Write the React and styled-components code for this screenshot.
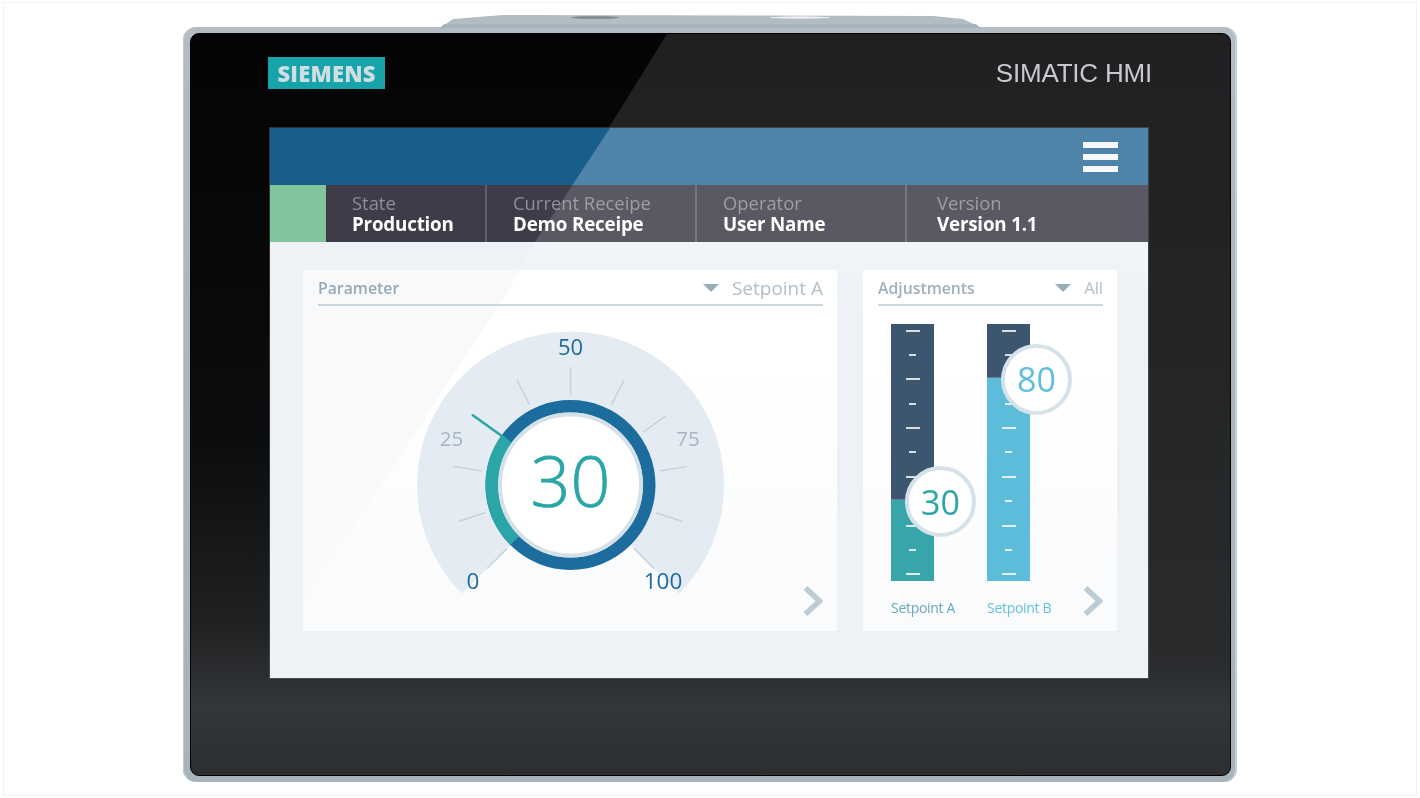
import React from "react";
import styled, { createGlobalStyle } from "styled-components";

const Global = createGlobalStyle`
  html, body { margin: 0; padding: 0; background: #fff; }
  #root { width: 1420px; height: 798px; overflow: hidden; }
  * { box-sizing: border-box; }
`;
const FONT = `"Open Sans", "Noto Sans", "Liberation Sans", sans-serif`;

const Page = styled.div`
  width: 1414px; height: 794px; margin: 2px 3px;
  border: 1px solid #f1f2f3; background: #fff;
  display: flex; justify-content: center; align-items: flex-start;
  padding-top: 24px; font-family: ${FONT};
`;
const Device = styled.div`
  position: relative; width: 1054px; height: 755px;
  padding: 6px 6px 6px 7px; border-radius: 13px;
  background: linear-gradient(180deg, #b2bcc2 0%, #a9b6be 50%, #a8b4bb 100%);
  box-shadow: inset 1px 0 0 #c3ccd2, inset -2px 0 0 #c2ced4;
  filter: blur(0.35px);
`;
const Mount = styled.svg`
  position: absolute; left: 250px; top: -13px; width: 560px; height: 14px;
`;
const Bezel = styled.div`
  position: relative; width: 100%; height: 100%;
  padding: 23px 83px 97px 79px; border-radius: 9px; overflow: hidden;
  border: 1px solid #000;
  background: linear-gradient(180deg, #050305 0%, #080809 29%, #0c0d0e 56%, #202122 80%, #33363a 91%, #2c2e30 100%);
`;
const BezelSheen = styled.div`
  position: absolute; inset: 0; pointer-events: none;
  background: linear-gradient(180deg, rgba(255,255,255,.115) 0%, rgba(255,255,255,.105) 56%, rgba(255,255,255,.05) 78%, rgba(255,255,255,0) 86%);
  clip-path: polygon(476px 0, 100% 0, 100% 100%, 0 100%, 0 766px);
`;
const BrandRow = styled.div`
  position: relative; display: flex; justify-content: space-between; align-items: flex-start;
  height: 71px; margin: 0 -5px 0 -2px;
`;
const Logo = styled.div`
  width: 117px; height: 32px; background: #16a3aa; color: #cfdee3;
  font: 800 22px/32px ${FONT}; text-align: center; letter-spacing: 0.2px;
`;
const Product = styled.div`
  color: #c6cacd; font: 400 26px/32px "Liberation Sans", sans-serif; letter-spacing: -0.2px;
`;
const Screen = styled.div`
  position: relative; width: 878px; height: 550px; background: #eef2f6;
  display: flex; flex-direction: column; overflow: hidden;
  box-shadow: 0 0 0 1px rgba(125,130,135,.35);
`;
const ScreenFrame = styled.div`
  position: relative; width: 878px; height: 550px;
`;
const ScreenSheen = styled.div`
  position: absolute; left: 0; right: 0; top: 0; height: 190px; pointer-events: none;
  background: linear-gradient(180deg,
    rgba(255,255,255,.24) 0, rgba(255,255,255,.24) 57px,
    rgba(255,255,255,.145) 57px, rgba(255,255,255,.145) 114px,
    rgba(255,255,255,.22) 114px, rgba(255,255,255,0) 190px);
  clip-path: polygon(340px 0, 100% 0, 100% 100%, 215px 100%);
`;
const TopBar = styled.div`
  height: 57px; background: #175e8c; display: flex; justify-content: flex-end;
  align-items: center; padding-right: 30px;
`;
const Burger = styled.div`
  width: 35px; display: flex; flex-direction: column; gap: 6px;
`;
const BurgerLine = styled.span`
  display: block; height: 6px; background: #f5f8fb;
`;
const StatusRow = styled.div`
  height: 57px; display: grid; grid-template-columns: 56px 159px 2px 208px 2px 208px 2px 1fr;
  background: #3e3c48;
`;
const StatusLight = styled.div`background: #82c49c;`;
const Divider = styled.div`background: #5f5e6b;`;
const StatusCell = styled.div`
  padding: 7px 0 0 ${p => p.$pad}px; display: flex; flex-direction: column;
`;
const StatusLabel = styled.div`
  color: #8d8d98; font: 400 18.4px/21px ${FONT};
`;
const StatusValue = styled.div`
  color: #fff; font: 700 18.8px/22px ${FONT}; letter-spacing: -0.2px;
`;
const Content = styled.div`
  flex: 1; display: flex; gap: 26px; padding: 28px 31px 47px 33px;
`;
const Panel = styled.div`
  position: relative; width: ${p => p.$w}px;
  background: ${p => p.$bg};
  display: flex; flex-direction: column;
`;
const PanelHead = styled.div`
  display: flex; align-items: center; height: 36px; margin: 0 14px 0 15px; padding-top: 2px;
  border-bottom: 2.5px solid #c9d8e0;
`;
const PanelTitle = styled.div`
  flex: 1; color: #97a9b7; font: 600 15.8px/20px ${FONT};
`;
const Caret = styled.span`
  width: 0; height: 0; margin-right: ${p => p.$gap}px;
  border-left: 8px solid transparent; border-right: 8px solid transparent;
  border-top: 8px solid #8fa4b3;
`;
const PanelFilter = styled.div`
  color: #a9b9c5; font: 400 ${p => p.$size}px/22px ${FONT};
`;
const GaugeSvg = styled.svg`
  display: block; width: 534px; height: 325px;
`;
const Chevron = styled.svg`
  position: absolute; right: ${p => p.$right}px; bottom: 15px; width: 20px; height: 30px;
`;
const Bars = styled.div`
  display: flex; padding: 18px 0 0 28px; height: 311px;
`;
const BarCol = styled.div`
  position: relative; width: 96px; display: flex; flex-direction: column;
`;
const Bar = styled.div`
  position: relative; width: 43px; height: 257px; display: flex; flex-direction: column;
  background: ${p => p.$fill};
`;
const BarEmpty = styled.div`
  height: ${p => p.$h}px; background: #3d566f; border-bottom: 1px solid rgba(255,255,255,.25);
`;
const Ticks = styled.div`
  position: absolute; inset: 5.5px 0 5.5px 0; display: flex; flex-direction: column;
  justify-content: space-between; align-items: center;
`;
const Tick = styled.span`
  display: block; height: 2px; width: ${p => (p.$long ? 14 : 7)}px; background: rgba(255,255,255,.8);
`;
const Bubble = styled.div`
  position: absolute; left: ${p => p.$x}px; top: ${p => p.$y}px; width: 71px; height: 71px;
  border-radius: 50%; background: #fff; border: 4px solid #d5e2e9;
  display: flex; align-items: center; justify-content: center;
  color: ${p => p.$c}; font: 400 34px/1 ${FONT};
`;
const BarLabel = styled.div`
  margin-top: 18px; color: ${p => p.$c}; font: 400 14px/18px ${FONT}; letter-spacing: -0.3px; white-space: nowrap;
`;

const CX = 267.5, CY = 179;
const polar = (r, deg) => {
  const a = (deg * Math.PI) / 180;
  return [CX + r * Math.sin(a), CY - r * Math.cos(a)];
};
const arc = (r, a0, a1) => {
  const [x0, y0] = polar(r, a0), [x1, y1] = polar(r, a1);
  return `M${x0} ${y0}A${r} ${r} 0 ${a1 - a0 > 180 ? 1 : 0} 1 ${x1} ${y1}`;
};
const fan = (() => {
  const [x0, y0] = polar(153.5, -135), [x1, y1] = polar(153.5, 135);
  return `M${CX} ${CY}L${x0} ${y0}A153.5 153.5 0 1 1 ${x1} ${y1}Z`;
})();
const tickAngles = [-135, -108, -81, -27, 0, 27, 54, 81, 108, 135];

const GaugeLabel = styled.text`
  font-family: ${FONT}; font-size: ${p => p.$s || 20}px; text-anchor: middle; fill: ${p => p.$c};
  font-weight: ${p => p.$w || 400};
`;
const GaugeValue = styled(GaugeLabel)`
  stroke: ${p => p.$c}; stroke-width: 0.7px;
`;

function Gauge() {
  const [nx0, ny0] = polar(80, -54.5), [nx1, ny1] = polar(120, -54.5);
  return (
    <GaugeSvg viewBox="0 0 534 325">
      <path d={fan} fill="#e4ebf2" />
      {tickAngles.map(a => {
        const [x0, y0] = polar(90, a);
        const [x1, y1] = polar(118, a);
        return <line key={a} x1={x0} y1={y0} x2={x1} y2={y1} stroke="#c7d4dc" strokeWidth="1.5" />;
      })}
      <circle cx={CX} cy={CY} r="78.7" fill="none" stroke="#1c6c9e" strokeWidth="12.6" />
      <path d={arc(78.7, -135, -54)} fill="none" stroke="#2aa5a8" strokeWidth="12.6" />
      <circle cx={CX} cy={CY} r="70.5" fill="#fff" stroke="#d5e1e8" strokeWidth="4" />
      <line x1={nx0} y1={ny0} x2={nx1} y2={ny1} stroke="#2aa5a8" strokeWidth="2.5" strokeLinecap="round" />
      <GaugeLabel x={CX} y={49} $c="#1f6a98" $s={22} $w={500}>50</GaugeLabel>
      <GaugeLabel x={CX - 119} y={140} $c="#a5b5c1" $s={20.5}>25</GaugeLabel>
      <GaugeLabel x={CX + 117.5} y={140} $c="#a5b5c1" $s={20.5}>75</GaugeLabel>
      <GaugeLabel x={CX - 97.5} y={283} $c="#1f6a98" $s={22.5} $w={500}>0</GaugeLabel>
      <GaugeLabel x={CX + 92.5} y={283} $c="#1f6a98" $s={22.5} $w={500}>100</GaugeLabel>
      <GaugeValue x={CX} y={201} $c="#2aa5a8" $s={70} $w={300}>30</GaugeValue>
    </GaugeSvg>
  );
}

const ChevronIcon = ({ right }) => (
  <Chevron $right={right} viewBox="0 0 20 30">
    <path d="M2.5 2L16.5 15L2.5 28" fill="none" stroke="#bdcbd5" strokeWidth="5.5" />
  </Chevron>
);

const tickList = Array.from({ length: 11 }, (_, i) => i);

function LevelBar({ empty, fill, value, color, label, labelColor, x, y }) {
  return (
    <BarCol>
      <Bar $fill={fill}>
        <BarEmpty $h={empty} />
        <Ticks>{tickList.map(i => <Tick key={i} $long={i % 2 === 0} />)}</Ticks>
      </Bar>
      <Bubble $x={x} $y={y} $c={color}>{value}</Bubble>
      <BarLabel $c={labelColor}>{label}</BarLabel>
    </BarCol>
  );
}

const statuses = [
  { label: "State", value: "Production", pad: 26 },
  { label: "Current Receipe", value: "Demo Receipe", pad: 26 },
  { label: "Operator", value: "User Name", pad: 26 },
  { label: "Version", value: "Version 1.1", pad: 30 },
];

const fadeLayer = "linear-gradient(180deg, rgba(250,251,252,0) 30%, rgba(250,251,252,1) 90%)";

export default function App() {
  return (
    <Page>
      <Global />
      <Device>
        <Mount viewBox="0 0 560 14">
          <path d="M7 14L20 5L70 1L500 2L530 5L547 13V14Z" fill="#b2bcc3" />
          <ellipse cx="162" cy="3.5" rx="24" ry="1.3" fill="#7f888e" />
          <ellipse cx="367" cy="3.5" rx="30" ry="1.2" fill="#eef2f4" />
          <path d="M7 14L11 10H543L547 14Z" fill="#a8b4bb" />
        </Mount>
        <Bezel>
          <BezelSheen />
          <BrandRow>
            <Logo>SIEMENS</Logo>
            <Product>SIMATIC HMI</Product>
          </BrandRow>
          <ScreenFrame>
            <Screen>
              <TopBar>
                <Burger><BurgerLine /><BurgerLine /><BurgerLine /></Burger>
              </TopBar>
              <StatusRow>
                <StatusLight />
                {statuses.map((s, i) => (
                  <React.Fragment key={s.label}>
                    {i > 0 && <Divider />}
                    <StatusCell $pad={s.pad}>
                      <StatusLabel>{s.label}</StatusLabel>
                      <StatusValue>{s.value}</StatusValue>
                    </StatusCell>
                  </React.Fragment>
                ))}
              </StatusRow>
              <Content>
                <Panel $w={534} $bg={`${fadeLayer}, linear-gradient(123deg, #f7f9fb 28.4%, #fff 28.4%)`}>
                  <PanelHead>
                    <PanelTitle>Parameter</PanelTitle>
                    <Caret $gap={13} />
                    <PanelFilter $size={19}>Setpoint A</PanelFilter>
                  </PanelHead>
                  <Gauge />
                  <ChevronIcon right={14} />
                </Panel>
                <Panel $w={254} $bg={`${fadeLayer}, #fff`}>
                  <PanelHead>
                    <PanelTitle>Adjustments</PanelTitle>
                    <Caret $gap={13} />
                    <PanelFilter $size={16.5}>All</PanelFilter>
                  </PanelHead>
                  <Bars>
                    <LevelBar empty={176} fill="#38a5ab" value="30" color="#2aa5a8" label="Setpoint A" labelColor="#6aa9bb" x={14} y={142} />
                    <LevelBar empty={54} fill="#5dbcd9" value="80" color="#5dbfdd" label="Setpoint B" labelColor="#67c0dc" x={14} y={19.5} />
                  </Bars>
                  <ChevronIcon right={14} />
                </Panel>
              </Content>
              <ScreenSheen />
            </Screen>
          </ScreenFrame>
        </Bezel>
      </Device>
    </Page>
  );
}
